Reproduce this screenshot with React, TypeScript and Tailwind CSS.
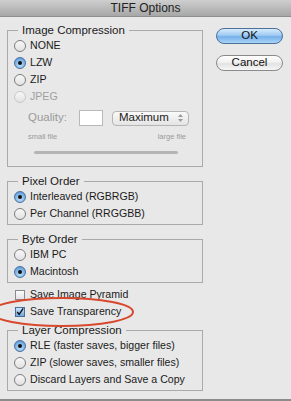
import React from 'react'

const font = { fontFamily: '"Liberation Sans", Arial, sans-serif' }

function Radio({ label, checked = false, disabled = false }: { label: string; checked?: boolean; disabled?: boolean }) {
  return (
    <div className="flex items-center h-[17px] gap-[4px]">
      {checked ? (
        <span className="w-[12px] h-[12px] rounded-full border border-[#4a6f9c] bg-[radial-gradient(circle_at_50%_70%,#bfe0fb_0%,#7eb4e6_55%,#4d8ad0_100%)] flex items-center justify-center shrink-0">
          <span className="w-[4px] h-[4px] rounded-full bg-[#111]" />
        </span>
      ) : (
        <span
          className={
            'w-[12px] h-[12px] rounded-full border shrink-0 bg-[linear-gradient(#f8f8f8,#e2e2e2)] ' +
            (disabled ? 'border-[#c8c8c8]' : 'border-[#7d7d7d]')
          }
        />
      )}
      <span className={'text-[10.6px] leading-none ' + (disabled ? 'text-[#a0a0a0]' : 'text-[#1a1a1a]')}>{label}</span>
    </div>
  )
}

function Group({ title, children, className = '' }: { title: string; children: React.ReactNode; className?: string }) {
  return (
    <fieldset className={'border border-[#aaaaaa] pl-[6px] pr-[6px] pb-[2px] ' + className}>
      <legend className="ml-[4px] px-[4px] text-[11.5px] leading-[14px] text-[#1a1a1a]">{title}</legend>
      {children}
    </fieldset>
  )
}

export default function App() {
  return (
    <div className="relative w-[291px] h-[401px] bg-[#e8e8e8] overflow-hidden flex flex-col" style={font}>
      {/* title bar */}
      <div className="h-[17px] bg-[linear-gradient(#cfcfcf,#a7a7a7)] border-b border-[#8e8e8e] flex items-center justify-center">
        <span className="text-[12px] text-[#222] leading-none">TIFF Options</span>
      </div>

      <div className="flex flex-1 pt-[6px]">
        {/* left column */}
        <div className="w-[196px] ml-[7px] flex flex-col">
          <Group title="Image Compression">
            <Radio label="NONE" />
            <Radio label="LZW" checked />
            <Radio label="ZIP" />
            <Radio label="JPEG" disabled />

            <div className="flex items-center h-[16px] mt-[5px] ml-[14px]">
              <span className="text-[11.5px] text-[#9a9a9a] w-[51px]">Quality:</span>
              <span className="w-[24px] h-[16px] bg-white border border-[#b8b8b8]" />
              <div className="ml-[9px] w-[77px] h-[15px] rounded-[4px] border border-[#b5b5b5] bg-[linear-gradient(#fafafa,#e4e4e4)] flex items-center">
                <span className="text-[11.5px] text-[#1a1a1a] ml-[6px] flex-1 leading-none">Maximum</span>
                <svg width="7" height="10" viewBox="0 0 7 10" className="mr-[4px]">
                  <path d="M1 4 L3.5 1 L6 4 Z" fill="#9a9a9a" />
                  <path d="M1 6 L3.5 9 L6 6 Z" fill="#9a9a9a" />
                </svg>
              </div>
            </div>

            <div className="flex justify-between items-center h-[12px] mt-[5px] ml-[14px] mr-[10px]">
              <span className="text-[7.5px] text-[#9a9a9a] leading-none">small file</span>
              <span className="text-[7.5px] text-[#9a9a9a] leading-none">large file</span>
            </div>

            <div className="h-[3px] mt-[8px] mb-[10px] ml-[20px] mr-[18px] rounded-full bg-[#b5b5b5]" />
          </Group>

          <Group title="Pixel Order" className="mt-[7px]">
            <Radio label="Interleaved (RGBRGB)" checked />
            <Radio label="Per Channel (RRGGBB)" />
          </Group>

          <Group title="Byte Order" className="mt-[7px]">
            <Radio label="IBM PC" />
            <Radio label="Macintosh" checked />
          </Group>

          <div className="flex flex-col mt-[3px] ml-[8px]">
            <div className="flex items-center h-[17px] gap-[5px]">
              <span className="w-[10px] h-[10px] border border-[#8a8a8a] bg-[linear-gradient(#fbfbfb,#e3e3e3)] shrink-0" />
              <span className="text-[10.6px] text-[#1a1a1a] leading-none">Save Image Pyramid</span>
            </div>
            <div className="flex items-center h-[17px] gap-[5px]">
              <span className="w-[10px] h-[10px] border border-[#4a6f9c] bg-[linear-gradient(#cde6fb,#6fa6dd)] shrink-0 flex items-center justify-center">
                <svg width="10" height="10" viewBox="0 0 10 10">
                  <path d="M1.5 5 L4 8 L9 0.5" stroke="#111" strokeWidth="1.8" fill="none" />
                </svg>
              </span>
              <span className="text-[10.6px] text-[#1a1a1a] leading-none">Save Transparency</span>
            </div>
          </div>

          <Group title="Layer Compression" className="mt-[3px]">
            <Radio label="RLE (faster saves, bigger files)" checked />
            <Radio label="ZIP (slower saves, smaller files)" />
            <Radio label="Discard Layers and Save a Copy" />
          </Group>
        </div>

        {/* right column: buttons */}
        <div className="ml-[13px] mt-[5px] flex flex-col gap-[11px]">
          <button className="w-[67px] h-[16px] rounded-full border border-[#4d6f98] bg-[linear-gradient(#d6ebfb_0%,#9fcaf2_45%,#76b0ea_55%,#a8d4f7_100%)] text-[11.5px] leading-none text-[#111]">
            OK
          </button>
          <button className="w-[67px] h-[16px] rounded-full border border-[#8a8a8a] bg-[linear-gradient(#ffffff_0%,#f1f1f1_45%,#e2e2e2_55%,#f6f6f6_100%)] text-[11.5px] leading-none text-[#111]">
            Cancel
          </button>
        </div>
      </div>

      {/* bottom edge */}
      <div className="h-[2px] bg-[#8c8c8c]" />

      {/* red annotation ellipse */}
      <svg className="absolute left-0 top-0 pointer-events-none" width="291" height="401">
        <ellipse cx="62" cy="312" rx="71" ry="14" fill="none" stroke="#d8482c" strokeWidth="2" />
      </svg>
    </div>
  )
}
